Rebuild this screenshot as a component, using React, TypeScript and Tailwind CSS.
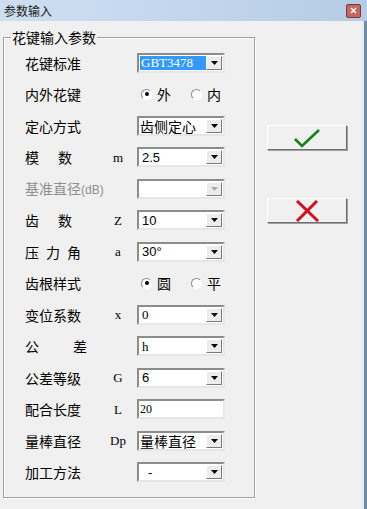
import React from "react";

const cjk = { fontFamily: '"Noto Sans CJK SC", "Noto Sans", sans-serif' };

function Arrow({ disabled }: { disabled?: boolean }) {
  return (
    <div className="flex h-full w-[16px] shrink-0 items-center justify-center border border-t-white border-l-white border-b-[#7a7a7a] border-r-[#7a7a7a] bg-[#ececec]">
      <svg width="7" height="4" viewBox="0 0 7 4">
        <path d="M0 0h7L3.5 4z" fill={disabled ? "#a8a8a8" : "#000"} />
      </svg>
    </div>
  );
}

function Combo({ value, selected, serif, big, disabled, indent }: { value: string; selected?: boolean; serif?: boolean; big?: boolean; disabled?: boolean; indent?: boolean }) {
  return (
    <div className="flex h-[20px] w-[88px] items-stretch border-2 border-t-[#8c8c8c] border-l-[#8c8c8c] border-b-[#e6e6e6] border-r-[#e6e6e6] bg-white p-[1px]">
      <div className="flex min-w-0 flex-1 items-center whitespace-nowrap">
        {selected ? (
          <span className="flex h-full w-full items-center bg-[#3399ff] pl-[1px] text-[13px] text-white" style={{ fontFamily: '"Liberation Serif", serif' }}>
            {value}
          </span>
        ) : (
          <span
            className={big ? "shrink-0 text-[14px] leading-none text-black" : indent ? "shrink-0 pl-[8px] text-[13px] leading-none text-black" : "shrink-0 pl-[2px] text-[13px] leading-none text-black"}
            style={big ? cjk : { fontFamily: serif ? '"Liberation Serif", serif' : '"Liberation Sans", sans-serif' }}
          >
            {value}
          </span>
        )}
      </div>
      <Arrow disabled={disabled} />
    </div>
  );
}

function Radio({ checked, label }: { checked?: boolean; label: string }) {
  return (
    <div className="flex items-center gap-[5px]">
      <span className="flex h-[11px] w-[11px] items-center justify-center rounded-full border border-t-[#8c8c8c] border-l-[#8c8c8c] border-b-white border-r-white bg-white">
        {checked && <span className="h-[4px] w-[4px] rounded-full bg-black" />}
      </span>
      <span className="text-[14px] leading-none" style={cjk}>{label}</span>
    </div>
  );
}

type Row = {
  label: React.ReactNode;
  sym?: string;
  field: React.ReactNode;
};

const rows: Row[] = [
  { label: "花键标准", field: <Combo value="GBT3478" selected /> },
  {
    label: "内外花键",
    field: (
      <div className="flex w-[88px] items-center gap-[20px] pl-[4px]">
        <Radio checked label="外" />
        <Radio label="内" />
      </div>
    ),
  },
  { label: "定心方式", field: <Combo value="齿侧定心" big /> },
  { label: <span className="flex w-[47px] justify-between"><span>模</span><span>数</span></span>, sym: "m", field: <Combo value="2.5" /> },
  {
    label: (
      <span className="whitespace-nowrap text-[#8f8f8f]">
        基准直径<span className="text-[12px]" style={{ fontFamily: '"Liberation Sans", sans-serif' }}>(dB)</span>
      </span>
    ),
    field: <Combo value="" disabled />,
  },
  { label: <span className="flex w-[47px] justify-between"><span>齿</span><span>数</span></span>, sym: "Z", field: <Combo value="10" /> },
  { label: <span className="flex w-[56px] justify-between"><span>压</span><span>力</span><span>角</span></span>, sym: "a", field: <Combo value="30°" /> },
  {
    label: "齿根样式",
    field: (
      <div className="flex w-[88px] items-center gap-[20px] pl-[4px]">
        <Radio checked label="圆" />
        <Radio label="平" />
      </div>
    ),
  },
  { label: "变位系数", sym: "x", field: <Combo value="0" serif /> },
  { label: <span className="flex w-[62px] justify-between"><span>公</span><span>差</span></span>, field: <Combo value="h" serif /> },
  { label: "公差等级", sym: "G", field: <Combo value="6" /> },
  {
    label: "配合长度",
    sym: "L",
    field: (
      <div className="flex h-[20px] w-[88px] items-center border-2 border-t-[#8c8c8c] border-l-[#8c8c8c] border-b-[#e6e6e6] border-r-[#e6e6e6] bg-white pl-[1px] text-[12px] leading-none" style={{ fontFamily: '"Liberation Serif", serif' }}>
        20
      </div>
    ),
  },
  { label: "量棒直径", sym: "Dp", field: <Combo value="量棒直径" big /> },
  { label: "加工方法", field: <Combo value="-" indent /> },
];

export default function App() {
  return (
    <div className="flex h-[509px] w-[367px] flex-col overflow-hidden bg-[#f0f0f0] text-black" style={cjk}>
      {/* title bar */}
      <div className="flex h-[21px] items-center justify-between bg-gradient-to-r from-[#cfdff1] via-[#c2d6ec] to-[#b5cce6] pl-[4px] pr-[6px]">
        <span className="text-[12px] leading-none text-[#1a1a1a]">参数输入</span>
        <div className="flex h-[14px] w-[15px] items-center justify-center rounded-[2px] border border-[#7a3a36] bg-[#c7665e]">
          <svg width="7" height="7" viewBox="0 0 7 7">
            <path d="M1 1l5 5M6 1L1 6" stroke="#fff" strokeWidth="1.6" />
          </svg>
        </div>
      </div>

      <div className="flex flex-1 border-r-[3px] border-r-[#6f8ca2]">
        <div className="flex flex-1 border-r-[2px] border-r-[#e4ebf2] pl-[3px] pt-[8px]">
          <fieldset className="h-[469px] w-[252px] border border-[#a0a0a0] shadow-[inset_1px_1px_0_#fff,1px_1px_0_#fff] pb-[9px]">
            <legend className="ml-[7px] px-[1px] text-[14px] leading-[16px]">花键输入参数</legend>
            <div className="flex flex-col pl-[21px] pt-[2px]">
              {rows.map((r, i) => (
                <div key={i} className="flex h-[31.5px] items-center">
                  <div className="flex w-[78px] items-center text-[14px] leading-none">{r.label}</div>
                  <div className="w-[30px] text-center text-[13px] leading-none" style={{ fontFamily: '"Liberation Serif", serif' }}>
                    {r.sym}
                  </div>
                  <div className="ml-[4px]">{r.field}</div>
                </div>
              ))}
            </div>
          </fieldset>

          <div className="ml-[12px] flex flex-col pt-[96px]">
            <button className="flex h-[25px] w-[80px] items-center justify-center border border-t-white border-l-white border-b-[#6e6e6e] border-r-[#6e6e6e] bg-[#f0f0f0] shadow-[1px_1px_0_#a0a0a0]">
              <svg width="28" height="20" viewBox="0 0 28 20">
                <path d="M2 11l7 7L26 2" fill="none" stroke="#168216" strokeWidth="2.6" />
              </svg>
            </button>
            <button className="mt-[48px] flex h-[25px] w-[80px] items-center justify-center border border-t-white border-l-white border-b-[#6e6e6e] border-r-[#6e6e6e] bg-[#f0f0f0] shadow-[1px_1px_0_#a0a0a0]">
              <svg width="26" height="22" viewBox="0 0 26 22">
                <path d="M3 1l21 20M23 1L3 21" fill="none" stroke="#d0141e" strokeWidth="3" />
              </svg>
            </button>
          </div>
        </div>
      </div>
    </div>
  );
}
